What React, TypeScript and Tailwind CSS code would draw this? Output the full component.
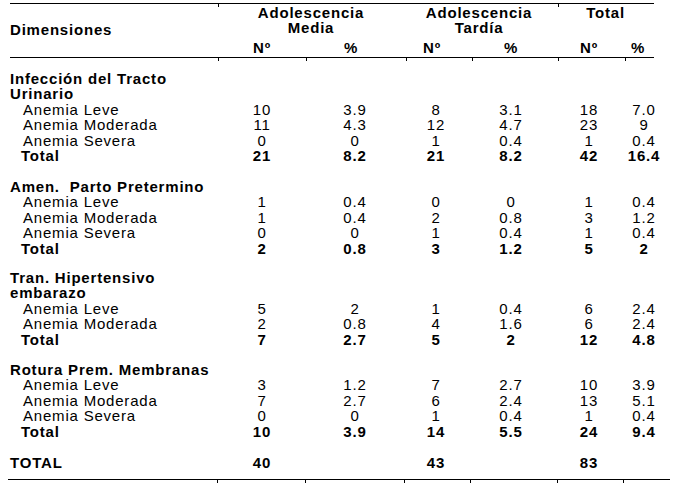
import clsx from "clsx";

const COLS = "grid grid-cols-[208px_88px_98px_64px_86px_70px_40px] pl-[10px]";

type Section = {
  title: string[];
  rows: string[][];
  total: string[];
  gap: string;
};

const SECTIONS: Section[] = [
  {
    title: ["Infección del Tracto", "Urinario"],
    rows: [
      ["Anemia Leve", "10", "3.9", "8", "3.1", "18", "7.0"],
      ["Anemia Moderada", "11", "4.3", "12", "4.7", "23", "9"],
      ["Anemia Severa", "0", "0", "1", "0.4", "1", "0.4"],
    ],
    total: ["21", "8.2", "21", "8.2", "42", "16.4"],
    gap: "pt-[12px]",
  },
  {
    title: ["Amen.\u00a0 Parto Pretermino"],
    rows: [
      ["Anemia Leve", "1", "0.4", "0", "0", "1", "0.4"],
      ["Anemia Moderada", "1", "0.4", "2", "0.8", "3", "1.2"],
      ["Anemia Severa", "0", "0", "1", "0.4", "1", "0.4"],
    ],
    total: ["2", "0.8", "3", "1.2", "5", "2"],
    gap: "pt-[15px]",
  },
  {
    title: ["Tran. Hipertensivo", "embarazo"],
    rows: [
      ["Anemia Leve", "5", "2", "1", "0.4", "6", "2.4"],
      ["Anemia Moderada", "2", "0.8", "4", "1.6", "6", "2.4"],
    ],
    total: ["7", "2.7", "5", "2", "12", "4.8"],
    gap: "pt-[13.5px]",
  },
  {
    title: ["Rotura Prem. Membranas"],
    rows: [
      ["Anemia Leve", "3", "1.2", "7", "2.7", "10", "3.9"],
      ["Anemia Moderada", "7", "2.7", "6", "2.4", "13", "5.1"],
      ["Anemia Severa", "0", "0", "1", "0.4", "1", "0.4"],
    ],
    total: ["10", "3.9", "14", "5.5", "24", "9.4"],
    gap: "pt-[14.5px]",
  },
];

// horizontal rule with the little tick marks under column boundaries
function Rule({ left, width, ticks }: { left: number; width: number; ticks: number[] }) {
  const stops = [0, ...ticks, width];
  return (
    <div className="flex mb-[-2px]" style={{ marginLeft: left }}>
      {stops.slice(1).map((s, i) => (
        <div
          key={i}
          style={{ width: s - stops[i] }}
          className={clsx("h-[3.5px] border-t-[1.5px] border-black", i > 0 && "border-l border-l-black")}
        />
      ))}
    </div>
  );
}

function Row({ cells, bold, indent }: { cells: string[]; bold?: boolean; indent: string }) {
  return (
    <div className={clsx(COLS, "leading-[15.5px]", bold && "font-bold")}>
      <div className={clsx("whitespace-nowrap", indent)}>{cells[0]}</div>
      {cells.slice(1).map((c, i) => (
        <div key={i} className="text-center">
          {c}
        </div>
      ))}
    </div>
  );
}

export default function App() {
  return (
    <div className="w-[693px] h-[491px] bg-white pt-[3px] text-black text-[15px] tracking-[0.8px] font-['Liberation_Sans',Arial,sans-serif]">
      <Rule left={10} width={644} ticks={[208, 548]} />

      <div className={clsx(COLS, "grid-rows-[35.5px_15.5px] pb-[1.5px] leading-[15.5px] font-bold")}>
        <div className="row-span-2 self-center">Dimensiones</div>
        <div className="col-span-2 text-center">
          Adolescencia
          <br />
          Media
        </div>
        <div className="col-span-2 text-center">
          Adolescencia
          <br />
          Tardía
        </div>
        <div className="col-span-2 text-center pr-[7px]">Total</div>
        <div className="text-center">Nº</div>
        <div className="text-center pr-[8px]">%</div>
        <div className="text-center pr-[8px]">Nº</div>
        <div className="text-center">%</div>
        <div className="text-center">Nº</div>
        <div className="text-center pr-[12px]">%</div>
      </div>

      <Rule left={10} width={644} ticks={[208, 296, 396, 462, 548, 615]} />

      <div>
        {SECTIONS.map((s, i) => (
          <div key={i} className={s.gap}>
            <div className="pl-[10px] font-bold whitespace-nowrap leading-[15.5px]">
              {s.title.map((t, j) => (
                <div key={j}>{t}</div>
              ))}
            </div>
            {s.rows.map((r, j) => (
              <Row key={j} cells={r} indent="pl-[13px]" />
            ))}
            <Row cells={["Total", ...s.total]} bold indent="pl-[11px]" />
          </div>
        ))}

        <div className="pt-[15.5px]">
          <Row cells={["TOTAL", "40", "", "43", "", "83", ""]} bold indent="" />
        </div>
      </div>

      <div className="mt-[9px]">
        <Rule left={8} width={662} ticks={[209, 297, 396, 462, 549, 615]} />
      </div>
    </div>
  );
}
